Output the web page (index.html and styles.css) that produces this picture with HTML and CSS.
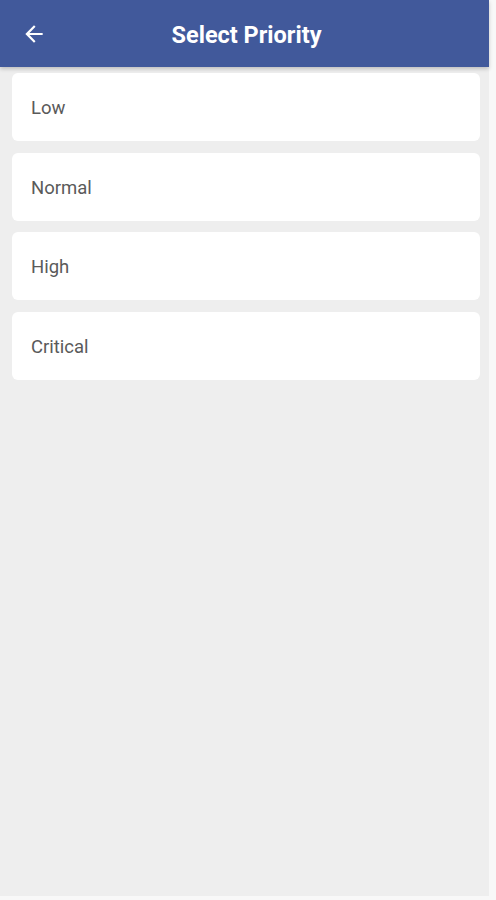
FILE: index.html
```html
<!DOCTYPE html>
<html lang="en">
<head>
    <meta charset="UTF-8">
    <meta name="viewport" content="width=device-width, initial-scale=1.0">
    <title>Select Priority</title>
    <link rel="stylesheet" href="styles.css">
</head>
<body>
    <div class="screen">
        <header class="app-bar">
            <button class="back-btn" aria-label="Back">
                <svg width="26" height="26" viewBox="0 0 24 24">
                    <path d="M20 11H7.83l5.59-5.59L12 4l-8 8 8 8 1.41-1.41L7.83 13H20v-2z" fill="#fff"/>
                </svg>
            </button>
            <h1 class="title">Select Priority</h1>
        </header>
        <div class="priority-list">
            <div class="priority-item">Low</div>
            <div class="priority-item">Normal</div>
            <div class="priority-item">High</div>
            <div class="priority-item">Critical</div>
        </div>
    </div>
</body>
</html>
```

FILE: styles.css
```css
html, body {
    margin: 0;
    height: 100%;
}
body {
    background-color: #f8f8f8;
    font-family: Roboto, "Liberation Sans", sans-serif;
}
.screen {
    width: 489px;
    height: 896px;
    background-color: #eeeeee;
}
.app-bar {
    height: 67px;
    background-color: #41599b;
    display: flex;
    align-items: center;
    box-shadow: 0 2px 4px rgba(0, 0, 0, 0.2);
}
.back-btn {
    background: none;
    border: none;
    padding: 0;
    margin-left: 21px;
    width: 26px;
    height: 26px;
    display: flex;
}
.title {
    flex: 1;
    margin: 2px 43px 0 0;
    text-align: center;
    color: #fff;
    font-size: 23.5px;
    font-weight: bold;
}
.priority-list {
    display: flex;
    flex-direction: column;
    gap: 11.7px;
    padding: 6px 9px 0 12px;
}
.priority-item {
    background-color: #fff;
    border-radius: 6px;
    height: 68px;
    display: flex;
    align-items: center;
    padding: 2px 0 0 19px;
    box-sizing: border-box;
    font-size: 18.5px;
    color: #5a5a5a;
}
```
